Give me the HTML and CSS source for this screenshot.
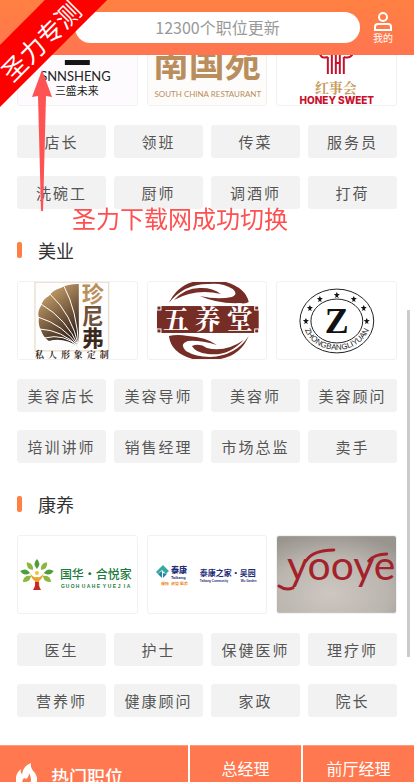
FILE: index.html
```
<!DOCTYPE html>
<html lang="zh-CN">
<head>
    <meta charset="UTF-8">
    <meta name="viewport" content="width=device-width, initial-scale=1.0">
    <title>职位</title>
    <link rel="stylesheet" href="styles.css">
</head>
<body>
    <header class="header">
        <input class="search" type="text" placeholder="12300个职位更新" aria-label="搜索职位">
        <a class="user" href="#">
            <svg width="18" height="20" viewBox="0 0 18 20" fill="none" stroke="#fff" stroke-width="2">
                <circle cx="9" cy="5" r="4"/>
                <path d="M1 18V15Q1 12 4 12H14Q17 12 17 15V18Z"/>
            </svg>
            <span>我的</span>
        </a>
    </header>

    <main class="content">
        <section class="section">
            <div class="brands">
                <a class="brand" href="#">
                    <svg viewBox="0 0 119 77">
                        <rect width="119" height="77" fill="#fdfbfd"/>
                        <rect x="47" y="32" width="25" height="5" fill="#151515"/>
                        <text class="lato" x="93" y="53" font-size="13" text-anchor="end" fill="#222">SNNSHENG</text>
                        <text x="37" y="67" font-size="11" fill="#222">三盛未来</text>
                    </svg>
                </a>
                <a class="brand" href="#">
                    <svg viewBox="0 0 119 77">
                        <rect width="119" height="77" fill="#fdfcfa"/>
                        <text x="5" y="49" font-size="36" font-weight="700" fill="#b98e5c">南国苑</text>
                        <text class="lato" x="60" y="69" font-size="8" text-anchor="middle" fill="#b98e5c">SOUTH CHINA RESTAURANT</text>
                    </svg>
                </a>
                <a class="brand" href="#">
                    <svg viewBox="0 0 119 77">
                        <g fill="none" stroke="#c8102e" stroke-width="2">
                            <path d="M51 46V29M55 46V25M59 46V25M63 46V25M67 46V29M59 35H64"/>
                            <path d="M43 26Q45 31 51 29M76 26Q73 31 67 29"/>
                        </g>
                        <text class="serif" x="38" y="65" font-size="14" font-weight="700" fill="#c99a5b">红事会</text>
                        <text class="inter" x="60" y="76" font-size="10" font-weight="800" text-anchor="middle" fill="#c8102e">HONEY SWEET</text>
                    </svg>
                </a>
            </div>
            <div class="tags">
                <a class="tag" href="#">店长</a>
                <a class="tag" href="#">领班</a>
                <a class="tag" href="#">传菜</a>
                <a class="tag" href="#">服务员</a>
                <a class="tag" href="#">洗碗工</a>
                <a class="tag" href="#">厨师</a>
                <a class="tag" href="#">调酒师</a>
                <a class="tag" href="#">打荷</a>
            </div>
        </section>

        <section class="section">
            <h2 class="section-title">美业</h2>
            <div class="brands">
                <a class="brand" href="#">
                    <svg viewBox="0 0 119 77">
                        <defs>
                            <linearGradient id="shell" x1="0" y1="0" x2="0.5" y2="1">
                                <stop offset="0.2" stop-color="#c19a66"/>
                                <stop offset="1" stop-color="#35231a"/>
                            </linearGradient>
                        </defs>
                        <rect x="17" y="0" width="74" height="69" fill="#fdfdfd" stroke="#e3d3bd"/>
                        <path d="M61 65V2Q49 2 43 6Q35 8 31 14Q25 17 23 24Q19 30 21 36Q20 43 23 48Q25 55 31 59Q46 55 61 65Z" fill="url(#shell)"/>
                        <path d="M61 65Q59 28 46 4M61 65Q54 32 32 12M61 65Q49 37 23 22M61 65Q46 43 20 35M61 65Q44 48 21 47M61 65Q46 51 27 56" fill="none" stroke="#fff"/>
                        <g font-size="22" font-weight="700">
                            <text x="64" y="20" fill="#b98f5c">珍</text>
                            <text x="64" y="42" fill="#6e5038">尼</text>
                            <text x="64" y="64" fill="#3b281d">弗</text>
                        </g>
                        <text class="serif" x="17 30 43 56 69 82" y="76" font-size="9" font-weight="700" fill="#3b281d">私人形象定制</text>
                    </svg>
                </a>
                <a class="brand" href="#">
                    <svg viewBox="0 0 119 77">
                        <g fill="#752d25">
                            <path d="M21 21Q32 -3 62 -2L78 0Q98 6 101 20Q98 22 92 21Q70 22 52 14Q70 18 84 15Q91 12 85 7Q74 0 60 2Q36 2 21 21Z"/>
                            <path d="M26 18Q38 5 54 6Q65 6 73 12Q48 6 26 18Z"/>
                            <path d="M21 54Q29 52 40 54Q58 55 69 63Q52 58 40 59Q31 62 38 69Q48 75 62 75Q88 74 101 54Q91 78 62 78H48Q23 72 21 54Z"/>
                            <path d="M44 64Q52 61 59 66Q77 71 96 58Q80 75 60 72Q48 71 44 64Z"/>
                            <rect x="9" y="24" width="102" height="27"/>
                        </g>
                        <g fill="#752d25" stroke="#fff" stroke-width="1">
                            <rect x="9" y="24" width="4" height="4"/>
                            <rect x="107" y="24" width="4" height="4"/>
                            <rect x="9" y="47" width="4" height="4"/>
                            <rect x="107" y="47" width="4" height="4"/>
                        </g>
                        <text class="serif" x="15 47 79" y="47" font-size="26" font-weight="700" fill="#fff">五养堂</text>
                    </svg>
                </a>
                <a class="brand" href="#">
                    <svg viewBox="0 0 119 77">
                        <defs>
                            <path id="ring" d="M26 38A34 30 0 0 0 94 38"/>
                            <path id="star" d="M0 -3L1 -1H3L1 1L2 3L0 2L-2 3L-1 1L-3 -1H-1Z"/>
                        </defs>
                        <g fill="none" stroke="#222">
                            <ellipse cx="60" cy="39" rx="37" ry="32"/>
                            <ellipse cx="60" cy="39" rx="26" ry="22"/>
                        </g>
                        <g fill="#151515">
                            <use href="#star" x="60" y="13"/>
                            <use href="#star" x="43" y="17"/>
                            <use href="#star" x="77" y="17"/>
                            <use href="#star" x="33" y="26"/>
                            <use href="#star" x="87" y="26"/>
                            <use href="#star" x="29" y="39"/>
                            <use href="#star" x="90" y="39"/>
                        </g>
                        <text class="serif" x="60" y="51" font-size="36" font-weight="700" text-anchor="middle" fill="#111">Z</text>
                        <text class="arial" font-size="8" text-anchor="middle" fill="#222"><textPath href="#ring" startOffset="50%">ZHONGBANGLIYUAN</textPath></text>
                    </svg>
                </a>
            </div>
            <div class="tags">
                <a class="tag" href="#">美容店长</a>
                <a class="tag" href="#">美容导师</a>
                <a class="tag" href="#">美容师</a>
                <a class="tag" href="#">美容顾问</a>
                <a class="tag" href="#">培训讲师</a>
                <a class="tag" href="#">销售经理</a>
                <a class="tag" href="#">市场总监</a>
                <a class="tag" href="#">卖手</a>
            </div>
        </section>

        <section class="section">
            <h2 class="section-title">康养</h2>
            <div class="brands">
                <a class="brand" href="#">
                    <svg viewBox="0 0 119 77">
                        <defs>
                            <path id="leaf" d="M0 0Q-5 -5 0 -10Q5 -5 0 0Z"/>
                        </defs>
                        <g fill="#4f9e3a">
                            <use href="#leaf" transform="translate(19 33)"/>
                            <use href="#leaf" fill="#8cb63c" transform="translate(15 34) rotate(-38)"/>
                            <use href="#leaf" fill="#8cb63c" transform="translate(23 34) rotate(38)"/>
                            <use href="#leaf" transform="translate(12 37) rotate(-78)"/>
                            <use href="#leaf" transform="translate(26 37) rotate(78)"/>
                            <use href="#leaf" fill="#8cb63c" transform="translate(13 40) rotate(-125)"/>
                            <use href="#leaf" fill="#8cb63c" transform="translate(25 40) rotate(125)"/>
                        </g>
                        <circle cx="19" cy="37" r="2" fill="#f5c23c"/>
                        <path d="M12 37Q15 42 19 41Q23 42 26 37Q24 44 21 45Q21 50 23 54H15Q18 50 17 45Q14 44 12 37Z" fill="#e9a32c"/>
                        <path d="M17 46H21Q20 50 23 54H15Q18 50 17 46Z" fill="#c9252c"/>
                        <text x="42" y="43" font-size="12" font-weight="500" fill="#1c7a3c">国华·合悦家</text>
                        <text class="arial" x="43 48 53 58 64 69 74 79 85 90 95 100 106 109" y="52" font-size="5" font-weight="700" fill="#1c7a3c">GUOHUAHEYUEJIA</text>
                    </svg>
                </a>
                <a class="brand" href="#">
                    <svg viewBox="0 0 119 77">
                        <path d="M8 36L15 29L21 35L18 38L14 34L10 38Z" fill="#35aaa0"/>
                        <path d="M10 38L14 35V42ZM15 42V37L19 38Z" fill="#2384a5"/>
                        <text x="23" y="37" font-size="8" font-weight="900" fill="#1d2c75">泰康</text>
                        <text class="arial" x="23" y="43" font-size="4" font-weight="700" fill="#1d2c75">Taikang</text>
                        <text x="13 17 23 27 32 36" y="49" font-size="4" font-weight="700" fill="#ee8a22">保险资管医养</text>
                        <text x="52" y="40" font-size="8" font-weight="700" fill="#1d2c75">泰康之家·吴园</text>
                        <text class="arial" x="52" y="46" font-size="3" font-weight="700" fill="#1d2c75">Taikang Community</text>
                        <text class="arial" x="93" y="46" font-size="3" font-weight="700" fill="#1d2c75">Wu Garden</text>
                    </svg>
                </a>
                <a class="brand" href="#">
                    <svg viewBox="0 0 119 77">
                        <defs>
                            <radialGradient id="wall" cx="0.45" cy="0.75" r="0.8">
                                <stop offset="0" stop-color="#cdc6c1"/>
                                <stop offset="0.6" stop-color="#bbb5b0"/>
                                <stop offset="1" stop-color="#99948e"/>
                            </radialGradient>
                        </defs>
                        <rect x="-1" width="121" height="77" fill="url(#wall)"/>
                        <text class="lato" x="10" y="44" font-size="41" fill="#a3222a">yooye</text>
                        <g fill="none" stroke="#a3222a" stroke-width="3" stroke-linecap="round">
                            <path d="M29 25Q36 14 57 14"/>
                            <path d="M16 52Q9 55 2 50"/>
                            <path d="M92 25Q98 18 110 18"/>
                        </g>
                    </svg>
                </a>
            </div>
            <div class="tags">
                <a class="tag" href="#">医生</a>
                <a class="tag" href="#">护士</a>
                <a class="tag" href="#">保健医师</a>
                <a class="tag" href="#">理疗师</a>
                <a class="tag" href="#">营养师</a>
                <a class="tag" href="#">健康顾问</a>
                <a class="tag" href="#">家政</a>
                <a class="tag" href="#">院长</a>
            </div>
        </section>
    </main>

    <div class="hot">
        <a class="hot-title" href="#">
            <svg width="21" height="26" viewBox="0 0 21 26">
                <path d="M15 0Q14 5 19 10Q24 18 17 24L14 26H6Q-1 22 0 14Q1 9 5 6Q4 10 6 11Q7 3 15 0Z" fill="#fff"/>
                <path d="M13 10Q13 14 10 16L8 15Q5 18 7 22Q10 25 13 22Q17 17 13 10Z" fill="#ff784f"/>
            </svg>
            热门职位
        </a>
        <a class="hot-item" href="#">总经理</a>
        <a class="hot-item" href="#">前厅经理</a>
    </div>

    <div class="scrollbar"></div>
    <div class="ribbon">圣力专测</div>
    <svg class="arrow" width="20" height="141" viewBox="0 0 20 141">
        <path d="M10 0L20 27L14 26L11 141H9L6 26L0 27Z" fill="#ff5252"/>
    </svg>
    <div class="note">圣力下载网成功切换</div>
</body>
</html>
```
FILE: styles.css
```
* {
    box-sizing: border-box;
}

body {
    margin: 0;
    height: 100vh;
    overflow: hidden;
    background: #fff;
    color: #555;
    font-family: "Noto Sans CJK SC", sans-serif;
    font-size: 16px;
}

a {
    color: inherit;
    text-decoration: none;
}

.header {
    position: fixed;
    top: 0;
    left: 0;
    right: 0;
    z-index: 10;
    display: flex;
    height: 55px;
    padding: 12px 8px 0 75px;
    background: linear-gradient(180deg, #ff8042 0%, #ff7550 100%);
}

.search {
    flex: 1;
    min-width: 0;
    height: 31px;
    padding: 0 16px 2px;
    border: 0;
    border-radius: 16px;
    background: #fff;
    font-family: inherit;
    font-size: 16px;
    text-align: center;
    outline: none;
}

.search::placeholder {
    color: #999;
}

.user {
    display: flex;
    flex-direction: column;
    align-items: center;
    width: 46px;
    color: #fff;
    font-size: 10px;
    line-height: 12px;
}

.content {
    padding: 27px 17px 28px;
}

.section-title {
    display: flex;
    align-items: center;
    gap: 16px;
    height: 72px;
    margin: 0;
    padding-top: 9px;
    color: #333;
    font-size: 18px;
    font-weight: 400;
}

.section-title::before {
    content: "";
    width: 5px;
    height: 16px;
    border-radius: 2px;
    background: #ff8042;
}

.brands {
    display: grid;
    grid-template-columns: repeat(3, 1fr);
    gap: 9px;
    margin-bottom: 19px;
}

.brand {
    height: 79px;
    border: 1px solid #f1f1f1;
    border-radius: 3px;
    overflow: hidden;
}

.brand svg {
    display: block;
    width: 100%;
    height: 77px;
}

.lato {
    font-family: Lato, sans-serif;
}

.inter {
    font-family: Inter, sans-serif;
}

.arial {
    font-family: "Liberation Sans", sans-serif;
}

.serif {
    font-family: "Liberation Serif", "Noto Serif CJK SC", "Noto Sans CJK SC", serif;
}

.tags {
    display: grid;
    grid-template-columns: repeat(4, 1fr);
    gap: 18px 8px;
}

.tag {
    height: 33px;
    border-radius: 3px;
    background: #f2f2f2;
    font-size: 15px;
    line-height: 33px;
    letter-spacing: 2px;
    text-align: center;
}

.hot {
    display: grid;
    grid-template-columns: 188fr 111fr 111fr;
    gap: 2px;
    color: #fff;
}

.hot-title,
.hot-item {
    background: #ff784f;
    border-top: 1px solid #ff9a7a;
}

.hot-title {
    display: flex;
    align-items: center;
    gap: 14px;
    height: 61px;
    padding-left: 16px;
    font-size: 18px;
    font-weight: 500;
}

.hot-item {
    line-height: 44px;
    text-align: center;
}

.scrollbar {
    position: fixed;
    top: 310px;
    right: 4px;
    width: 3px;
    height: 347px;
    background: #ccc;
}

.ribbon {
    position: fixed;
    top: 16px;
    left: -62px;
    z-index: 20;
    width: 200px;
    height: 44px;
    background: #f00;
    color: #fff;
    font-size: 25px;
    line-height: 50px;
    text-align: center;
    transform: rotate(-45deg);
}

.arrow {
    position: fixed;
    top: 70px;
    left: 32px;
    z-index: 21;
}

.note {
    position: fixed;
    top: 200px;
    left: 72px;
    z-index: 21;
    color: #ff5050;
    font-size: 24px;
    line-height: 36px;
    white-space: nowrap;
}
```
